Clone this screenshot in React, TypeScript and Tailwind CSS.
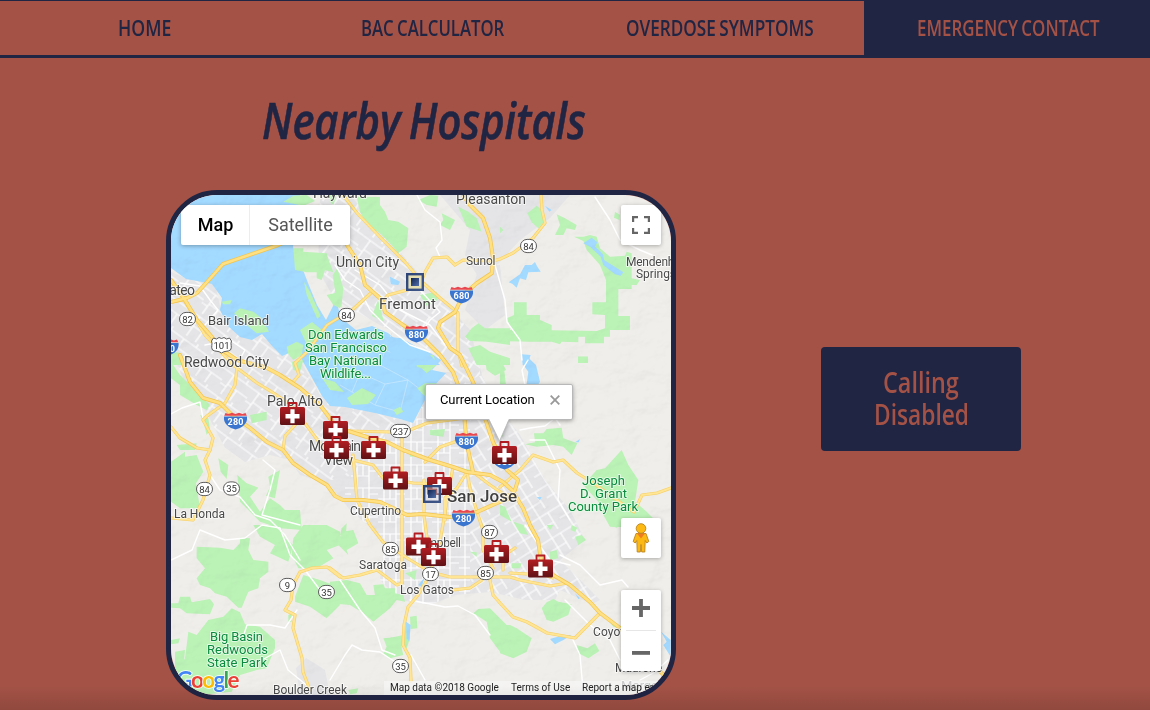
import { useLayoutEffect, useRef, useState, type ReactNode } from "react";

/** One line of text, condensed horizontally so that it takes up `width` pixels. */
function CondensedText({ text, width }: { text: string; width: number }) {
  const ref = useRef<HTMLSpanElement>(null);
  const [scale, setScale] = useState(1);
  useLayoutEffect(() => {
    if (ref.current) setScale(width / ref.current.offsetWidth);
  }, [width]);
  return (
    <span className="flex justify-start whitespace-nowrap" style={{ width }}>
      <span ref={ref} className="origin-left [word-spacing:-0.06em]" style={{ transform: `scaleX(${scale})` }}>
        {text}
      </span>
    </span>
  );
}

const navItems = [
  { label: "HOME", width: 53, active: false },
  { label: "BAC CALCULATOR", width: 143, active: false },
  { label: "OVERDOSE SYMPTOMS", width: 188, active: false },
  { label: "EMERGENCY CONTACT", width: 183, active: true },
];

const highways = [
  "171,280 185,300 197,320 212,337 218,347 237,360 260,366 267,368 280,375 300,388 320,405 335,425 348,431 370,438 387,442 403,450 430,460 453,467 467,472 490,475 503,482 512,490 523,508 530,525 538,540 541,560 553,575 570,585 590,602 600,613 620,628 650,660 668,680",
  "171,302 187,298 197,293 207,282 223,264 278,245 335,222",
  "180,355 190,382 203,398 220,403 232,415 250,428 267,442 283,450 293,463 310,475 327,485 335,496 343,500 363,500 380,502 393,508 407,515 423,514 450,517 477,512 497,503 510,498 515,490 518,480 507,470 493,442 485,418 473,382 460,355 450,348 438,328 440,322 455,312 463,295 477,283 492,273 493,258 490,238 483,218 470,205 463,195",
  "335,222 347,245 360,265 365,285 382,300 385,312 403,325 423,338 440,355 453,372 463,398 465,425 467,445 473,472",
];

const majorRoads = [
  "343,195 357,213 380,237 405,262 422,282 440,298 457,312",
  "458,313 458,350 462,366",
  "541,195 542,210 545,223 533,238 513,253 500,259 493,261 463,260 455,265 447,257 433,258 425,272 420,285 407,290 388,295 384,300",
  "372,292 350,312 340,317 327,325 307,352 295,363 299,375 293,382",
  "171,302 184,300 205,335 233,365 257,383 272,392 291,405 310,430 325,450 353,460 373,465 383,478 413,483 445,484",
  "237,368 235,385 225,403 207,416 203,420 213,438 210,450 205,460 210,475 203,500 193,520 171,518",
  "171,427 180,438 197,448 210,450",
  "283,450 285,436 296,424 304,410",
  "353,455 357,500 370,525 383,542 407,558 430,572 450,577 477,577 510,577 520,580 550,586 567,583",
  "510,573 545,575 553,578",
  "348,431 390,432 410,430 427,423 450,420 465,418",
  "453,467 447,500 442,530 438,550 430,572 427,580 418,595 408,607 404,625 403,645 410,658 411,681",
  "477,512 483,530 483,550 493,568 490,580 493,595 500,603 513,617 527,622 547,633 575,638 600,613",
  "467,472 470,488 477,512",
  "330,568 343,578 360,575 377,570 397,585 402,583",
  "402,435 402,583",
  "424,480 424,516 428,545",
  "453,590 470,588 482,580",
  "340,577 327,567 312,568 300,572 293,585 291,600 285,610 295,615 293,628 302,658 303,672 310,690",
  "500,487 520,470 533,455 553,462 563,460 577,473 593,483 610,495 625,506 634,512 642,495 657,493 671,488",
  "425,462 440,447 460,440",
  "467,472 457,488 445,498 445,520",
  "473,472 490,485 505,495 512,495",
  "503,570 503,556 515,548",
];

const minorRoads = [
  "417,195 425,210 440,222 442,240 436,248 440,257",
  "495,265 505,300 507,322 520,340 522,360",
  "595,197 610,220 620,240 640,250 652,255",
  "171,414 182,408 200,402 203,418",
  "210,475 220,490 240,497 255,515 270,520 285,535 300,560",
  "263,460 275,470 270,490 262,515 300,525",
  "171,560 192,550 200,530 225,540 245,538 262,525 280,528 290,555 305,570 320,590",
  "242,640 247,625 270,625 285,628 297,610",
  "262,660 280,650 288,670 310,688",
  "330,680 345,655 352,645 362,650 380,652 400,665",
  "340,580 360,610 375,628 382,650 395,655",
  "411,655 425,680",
  "410,600 445,607 458,606 475,615 490,635",
  "520,430 530,428 545,426 555,418 560,425",
  "550,395 540,385 525,385 522,370 528,360",
  "530,440 545,440 560,470 558,500 570,520",
  "560,555 580,565 600,585 622,580 628,587",
  "525,525 550,560 570,565",
  "565,600 590,625 610,640 620,660",
  "573,640 580,655 583,690",
  "640,680 655,672 668,660",
  "205,345 230,340 245,350 235,368",
  "180,283 200,286 210,300 218,310 205,325",
  "335,265 345,280 360,290 370,310 385,325 410,345 430,352",
  "355,270 380,285 400,310 430,325 445,345",
  "420,290 440,312 430,320 420,335",
];

type Label = [text: string, x: number, y: number, size: number, width?: number];

const townLabels: Label[] = [
  ["Hayward", 313, 198, 14, 54],
  ["Pleasanton", 456, 204, 14, 70],
  ["Union City", 336, 267, 14, 63],
  ["Sunol", 466, 265, 12, 29.5],
  ["Mendenhall", 626, 265.5, 12, 60],
  ["Springs", 636, 277.5, 12, 40],
  ["Fremont", 379, 309, 15, 57],
  ["San Mateo", 133, 294.5, 14, 62],
  ["Bair Island", 208, 324.5, 13, 61],
  ["Redwood City", 184, 367, 14, 85],
  ["Palo Alto", 267, 406, 14, 56],
  ["Mountain", 309, 451, 14, 52],
  ["View", 324, 465, 14, 29],
  ["Cupertino", 350, 514.5, 12, 51],
  ["Campbell", 413, 547, 12, 48],
  ["Saratoga", 359, 568.5, 12, 48],
  ["Los Gatos", 400, 594, 12, 54],
  ["La Honda", 174, 518, 12, 51],
  ["Boulder Creek", 273, 694, 12, 74],
  ["Coyote", 593, 635.5, 12, 38],
  ["Madrone", 615, 672, 12, 47],
  ["Morgan Hill", 621, 690, 13, 66],
];

const parkLabels: Label[] = [
  ["Don Edwards", 308, 338.5, 13, 76],
  ["San Francisco", 305, 351.5, 13, 82],
  ["Bay National", 309, 364.5, 13, 73],
  ["Wildlife...", 320, 377.5, 13, 51],
  ["Joseph", 582, 484.5, 13, 43],
  ["D. Grant", 580, 497.5, 13, 47],
  ["County Park", 568, 510.5, 13, 70],
  ["Big Basin", 210, 640.5, 13, 53],
  ["Redwoods", 207, 653.5, 13, 61],
  ["State Park", 207, 666.5, 13, 60],
];

const interstates: [string, number, number][] = [
  ["680", 461.5, 295],
  ["880", 416.5, 334],
  ["280", 235.5, 421],
  ["880", 466.5, 441],
  ["280", 463.5, 518],
  ["680", 504.5, 461],
  ["280", 167, 347.5],
];

const stateRoutes: [string, number, number][] = [
  ["84", 528.5, 246],
  ["84", 346.5, 315],
  ["82", 187.5, 319],
  ["237", 400.5, 431],
  ["84", 204.5, 489],
  ["35", 231.5, 488.5],
  ["87", 489.5, 532],
  ["85", 390.5, 549],
  ["85", 485.5, 573],
  ["17", 430.5, 574],
  ["9", 287.5, 585],
  ["35", 326.5, 592],
  ["35", 400.5, 666],
];

const hospitals: [number, number][] = [
  [292.5, 425],
  [335.5, 439],
  [336.5, 459],
  [373.5, 459],
  [395.5, 489.5],
  [439.5, 495],
  [504.5, 464],
  [418.5, 555.5],
  [433.5, 566],
  [496.5, 563],
  [540.5, 577.5],
];

/** A map section with its own origin, drawn in thirds of a pixel. */
function Section({ x, y, fill, shapes }: { x: number; y: number; fill: string; shapes: string[] }) {
  return (
    <g transform={`translate(${x} ${y}) scale(0.33333)`} fill={fill}>
      {shapes.map((points) => (
        <polygon key={points} points={points} />
      ))}
    </g>
  );
}

const parks: { x: number; y: number; shapes: string[] }[] = [
  { x: 160, y: 185, shapes: ["400,190 430,190 430,200 500,205 505,222 520,262 495,255 485,285 470,280 470,262 440,262 405,255", "432,290 450,320 482,392 472,402 440,330", "500,330 540,320 540,370 520,360", "370,50 400,32 440,30 465,48 430,62", "222,385 240,370 280,380 305,400 327,440 290,445 260,420", "380,485 410,470 430,480 425,510 400,525 385,508", "33,500 60,503 72,520 70,540 33,540", "185,350 215,345 210,358 190,358"] },
  { x: 330, y: 185, shapes: ["80,35 150,36 150,60 165,80 175,105 205,110 235,130 230,185 205,205 185,180 150,145 110,120 90,80", "265,45 300,30 325,32 320,65 290,60", "385,65 415,80 440,100 455,140 410,125 395,90", "335,85 375,105 360,135 330,120 340,105", "405,455 425,430 445,415 465,430 540,430 540,480 470,470 420,468", "415,490 450,480 480,500 540,520 540,540 440,540", "8,270 22,250 40,310 34,370 20,350", "270,330 320,320 322,345 290,362", "0,0 20,30 10,60 0,50"] },
  { x: 500, y: 185, shapes: ["82,85 110,62 125,75 138,105 115,130 95,112", "170,88 195,100 230,120 225,135 200,130 190,150 165,150 180,120", "222,155 250,155 270,150 290,155 300,190 330,215 375,212 380,200 395,205 395,280 420,285 410,300 395,300 395,312 355,312 355,393 390,393 390,435 330,435 330,455 312,455 312,475 255,475 255,455 235,455 235,472 185,470 180,478 155,470 90,470 0,468 0,432 35,435 20,400 42,390 42,352 80,352 80,390 120,390 120,405 155,420 155,436 290,438 315,430 315,390 277,388 277,352 318,352 318,285 300,240 260,195 250,168", "234,515 264,515 264,534 234,534", "0,510 15,530 10,540 0,540", "345,80 360,90 358,105 342,98", "0,125 10,135 0,145"] },
  { x: 160, y: 355, shapes: ["33,20 60,60 85,85 130,130 150,150 140,165 110,150 60,120 60,90 33,70", "33,320 75,290 75,305 110,300 130,350 108,385 120,460 60,460 33,440", "175,310 205,330 200,372 182,350", "232,360 260,385 295,398 270,425 300,470 330,430 360,450 375,465 420,465 425,525 360,520 300,500 240,440", "325,365 360,345 345,430 318,422 330,395", "270,180 320,170 320,195 275,205", "50,270 110,265 105,285 60,285", "120,180 145,190 150,225 140,240 130,200", "395,20 430,15 420,50 400,45"] },
  { x: 330, y: 355, shapes: ["260,0 310,0 320,30 290,55 275,40 260,35", "465,15 490,0 510,10 528,45 495,62 470,45", "262,100 285,85 320,85 300,130 280,120", "300,225 345,222 340,245 300,240", "190,165 210,155 220,170 200,180", "500,230 520,240 510,252", "395,340 425,345 420,360", "35,520 50,505 48,540 30,540", "240,290 255,290 255,305 240,305"] },
  { x: 500, y: 355, shapes: ["75,268 105,262 102,235 130,235 140,222 185,218 190,250 232,265 215,300 190,275 160,270 110,275", "365,285 385,330 415,375 405,440 440,470 480,510 480,520 330,515 310,480 295,440 250,390 290,345 315,340", "234,5 264,5 264,24 234,24", "0,450 15,455 35,500 0,480", "40,500 70,510 85,540 60,535", "0,20 12,40 18,90 0,90", "215,510 232,518 225,530 212,525"] },
  { x: 160, y: 525, shapes: ["110,65 180,68 220,75 240,55 240,38 270,40 265,75 280,105 325,110 325,140 300,160 295,190 265,200 245,248 235,248 200,215 165,205 150,190 120,180 110,160 135,130 110,100", "33,235 55,235 60,215 90,215 95,232 150,222 162,238 150,268 80,265 60,250 33,248", "145,285 190,275 215,250 240,262 255,298 300,305 345,345 345,370 320,430 290,435 240,450 215,500 120,510 60,480 50,440 75,400 85,320 110,330", "280,0 360,0 375,40 400,60 385,110 330,85 345,60 300,35", "400,40 430,0 500,0 540,20 540,60 500,75 520,100 470,130 415,130 395,90", "405,215 430,150 480,165 520,180 540,240 500,280 450,245 405,230", "33,345 60,340 55,355 33,358", "45,380 75,375 70,430 45,440", "385,270 395,265 395,290 385,292"] },
  { x: 330, y: 525, shapes: ["0,40 30,35 35,20 70,15 85,55 50,75 55,90 25,60", "0,170 50,165 90,175 110,210 135,210 130,180 160,178 165,190 195,190 195,205 220,210 225,230 200,225 180,250 130,290 100,265 60,240 0,235", "160,340 215,335 215,370 220,390 180,400 160,385 170,365", "240,275 260,272 262,310 242,312", "430,265 445,252 480,250 500,270 540,310 540,390 510,380 480,340 470,290", "225,145 260,135 255,165", "55,495 85,490 80,505 60,508", "175,340 220,330 230,290 240,340 230,370", "420,80 440,82 440,95"] },
  { x: 500, y: 525, shapes: ["125,250 140,232 160,222 175,230 215,238 205,270 160,290 140,285", "0,300 30,300 50,310 95,340 80,380 40,400 0,385", "230,360 262,370 285,355 298,378 265,400 235,385", "315,275 345,300 360,310 340,305", "140,0 160,0 150,15", "225,35 245,30 258,45 235,60", "150,80 170,75 175,100 150,105", "35,115 65,115 60,130 35,130", "325,0 360,0 350,8", "430,480 450,470 460,480"] },
];

const lakes: { x: number; y: number; shapes: string[] }[] = [
  { x: 500, y: 185, shapes: ["26,292 60,268 75,240 95,240 105,231 112,245 122,260 85,262 78,285 60,280 50,308 38,297", "250,175 275,158 292,172 285,185 300,198 310,210 312,225 370,262 362,272 345,268 310,240 302,215 270,185", "65,508 92,510 82,540 68,540", "135,62 155,75 148,80"] },
  { x: 500, y: 355, shapes: ["72,0 80,0 92,15 108,30 120,80 115,88 80,88 85,50 70,30", "225,262 240,252 236,262", "110,426 125,426 120,436"] },
  { x: 330, y: 525, shapes: ["228,290 242,300 238,350 230,340", "265,180 285,155 275,185"] },
  { x: 500, y: 525, shapes: ["483,320 512,345 512,395 490,360 500,350", "150,342 180,333 215,330 190,345 165,358", "225,205 240,220 235,222"] },
  { x: 330, y: 185, shapes: ["180,275 210,290 205,300 182,298", "175,455 215,460 250,480 290,500 330,540 200,540 170,480"] },
];

const urbanShapes = [
  "171,272 190,280 215,283 222,315 240,335 258,335 275,345 300,360 320,395 345,405 415,423 430,385 445,372 480,372 500,410 520,435 545,480 570,510 585,540 560,560 600,600 592,604 560,590 555,600 525,600 490,592 455,595 430,605 400,600 380,580 385,540 350,510 330,485 300,475 290,460 270,455 245,462 225,448 205,410 190,395 171,350",
  "320,195 350,195 420,275 470,330 482,375 450,372 420,345 380,325 335,300 318,270",
  "440,195 570,195 550,218 520,240 500,262 480,280 465,255 470,230",
  "480,265 500,265 505,315 485,330 465,310",
  "296,668 306,658 325,670 330,695 300,695",
];

function MapDrawing() {
  return (
    <svg viewBox="171 195 500 500" className="block size-full" fontFamily="Roboto, sans-serif">
      <defs>
        <clipPath id="urban-area">
          {urbanShapes.slice(0, 2).map((p) => (
            <polygon key={p} points={p} />
          ))}
        </clipPath>
        <pattern id="diagonal-streets" width="31" height="27" patternUnits="userSpaceOnUse" patternTransform="rotate(36)">
          <path d="M0 4H31M7 4V27M22 0V4M0 18H7M7 15H31M18 15V27" stroke="#fff" strokeWidth="1.2" fill="none" />
        </pattern>
        <pattern id="straight-streets" width="27" height="23" patternUnits="userSpaceOnUse">
          <path d="M0 5H27M6 0V23M18 0V23M0 16H18M18 11H27M12 5V16" stroke="#fff" strokeWidth="1.2" fill="none" />
        </pattern>
        <pattern id="east-streets" width="25" height="24" patternUnits="userSpaceOnUse" patternTransform="rotate(-32)">
          <path d="M0 5H25M8 0V24M18 5V24M0 16H18" stroke="#fff" strokeWidth="1.2" fill="none" />
        </pattern>
        <filter id="relief" x="0" y="0" width="100%" height="100%">
          <feTurbulence type="fractalNoise" baseFrequency="0.035 0.045" numOctaves="4" seed="8" />
          <feDiffuseLighting surfaceScale="5" lightingColor="#fff" diffuseConstant="1.1">
            <feDistantLight azimuth="225" elevation="58" />
          </feDiffuseLighting>
        </filter>
        <linearGradient id="kit" x1="0" y1="0" x2="0" y2="1">
          <stop offset="0" stopColor="#b21d22" />
          <stop offset="1" stopColor="#5f1216" />
        </linearGradient>
        <linearGradient id="station" x1="0" y1="0" x2="1" y2="1">
          <stop offset="0" stopColor="#2c4478" />
          <stop offset="1" stopColor="#3f5788" />
        </linearGradient>
        <linearGradient id="station-core" x1="0" y1="0" x2="1" y2="1">
          <stop offset="0" stopColor="#10234f" />
          <stop offset="1" stopColor="#5370ab" />
        </linearGradient>
      </defs>

      <rect x="171" y="195" width="500" height="500" fill="#f0eeea" />
      <g fill="#e5e5e8">
        {urbanShapes.map((p) => (
          <polygon key={p} points={p} />
        ))}
      </g>
      <g clipPath="url(#urban-area)">
        <polygon points="171,195 480,195 480,375 400,420 345,480 171,480" fill="url(#diagonal-streets)" />
        <polygon points="400,420 470,380 470,610 345,610 345,480" fill="url(#straight-streets)" />
        <rect x="470" y="376" width="150" height="240" fill="url(#east-streets)" />
      </g>

      <path
        d="M171 195H300L293 247 300 262 308 283 317 305 326 320 336 300 341 318 356 330 372 326 388 333 402 345 425 350 441 360 432 370 446 373 432 388 426 398 413 423 400 419 375 413 345 407 330 406 322 396 311 376 302 360 296 350 282 356 272 346 262 334 252 340 240 337 228 326 220 310 222 298 212 284 197 281 186 279 171 268Z"
        fill="#a3daff"
      />
      <g stroke="#c9e9ff" strokeWidth="0.8" fill="none">
        <path d="M345 380 360 373 385 384 408 380 425 393M360 373 352 392 375 405 385 384M375 405 400 412 408 380M392 333 385 350 410 360 432 370M385 350 380 365 408 380M340 385 352 392" />
      </g>

      {parks.map((s, i) => (
        <Section key={i} {...s} fill="#bbf2b6" />
      ))}
      <g fill="#bbf2b6">
        <polygon points="300,330 312,322 322,330 316,342 308,347" />
        <polygon points="347,398 362,388 376,395 368,404 352,405" />
        <polygon points="378,300 384,322 372,316" />
        <polygon points="322,378 335,382 344,392 330,390" />
      </g>
      {lakes.map((s, i) => (
        <Section key={i} {...s} fill="#a3daff" />
      ))}
      <path
        d="M171 360 225 450 300 475 345 510 385 545 400 600 490 595 600 605 560 560 585 540 545 480 510 420 482 375 470 330 400 260 360 195H671V695H171Z"
        filter="url(#relief)"
        opacity="0.09"
        className="mix-blend-multiply"
      />

      <g fill="none" strokeLinejoin="round" strokeLinecap="round">
        {minorRoads.map((p) => (
          <polyline key={p} points={p} stroke="#fff" strokeWidth="1.4" />
        ))}
        {majorRoads.map((p) => (
          <polyline key={p} points={p} stroke="#f6cf65" strokeWidth="3.2" />
        ))}
        {majorRoads.map((p) => (
          <polyline key={p} points={p} stroke="#ffe594" strokeWidth="2" />
        ))}
        {highways.map((p) => (
          <polyline key={p} points={p} stroke="#f3c54f" strokeWidth="4" />
        ))}
        {highways.map((p) => (
          <polyline key={p} points={p} stroke="#ffe183" strokeWidth="2.6" />
        ))}
      </g>

      {interstates.map(([n, x, y]) => (
        <g key={`${n}-${x}`} transform={`translate(${x} ${y})`}>
          <path d="M-11.5-4.5H11.5C12.5 3 6 7 0 8.5-6 7-12.5 3-11.5-4.5Z" fill="#3a76d0" />
          <path d="M-10-8-7-7-3.5-8.3 0-7 3.5-8.3 7-7 10-8 11.3-5.3H-11.3Z" fill="#e8474f" />
          <text y="4" textAnchor="middle" fontSize="9" fontWeight="700" fill="#fff" textLength="16">
            {n}
          </text>
        </g>
      ))}
      {stateRoutes.map(([n, x, y]) => {
        const half = n.length === 3 ? 10 : 8;
        return (
          <g key={`${n}-${x}-${y}`} transform={`translate(${x} ${y})`}>
            <rect x={-half} y="-6.6" width={half * 2} height="13.2" rx="6.6" fill="#fff" stroke="#5c5c5c" />
            <text y="3.5" textAnchor="middle" fontSize="9.5" fill="#333">
              {n}
            </text>
          </g>
        );
      })}
      <g transform="translate(221.5 345)">
        <path d="M-8-7-5-6-2.5-7.5 0-6.5 2.5-7.5 5-6 8-7 10-4C8.5-1 11 2 9 5 6 7 3 5.5 0 8-3 5.5-6 7-9 5-11 2-8.5-1-10-4Z" fill="#fff" stroke="#5c5c5c" />
        <text y="3.5" textAnchor="middle" fontSize="9.5" fill="#333">
          101
        </text>
      </g>

      <g fill="#484848" stroke="#fff" strokeOpacity="0.7" strokeWidth="1.8" strokeLinejoin="round" paintOrder="stroke">
        {townLabels.map(([t, x, y, size, w]) => (
          <text key={t} x={x} y={y} fontSize={size} textLength={w}>
            {t}
          </text>
        ))}
        <text x="447" y="501.5" fontSize="17" fontWeight="500" textLength="70" fill="#404040">
          San Jose
        </text>
      </g>
      <g fill="#098a3e" stroke="#e6fbe6" strokeWidth="1.8" strokeLinejoin="round" paintOrder="stroke">
        {parkLabels.map(([t, x, y, size, w]) => (
          <text key={t} x={x} y={y} fontSize={size} textLength={w}>
            {t}
          </text>
        ))}
      </g>

      {hospitals.map(([x, bottom]) => (
        <g key={`${x}-${bottom}`} transform={`translate(${x} ${bottom - 18})`}>
          <path d="M-4 1V-4H4V1" fill="none" stroke="#b21d22" strokeWidth="1.8" strokeLinejoin="round" />
          <rect x="-12.5" y="0" width="25" height="18" rx="1.6" fill="url(#kit)" />
          <path d="M-2.1 2.2H2.1V7H7V11.4H2.1V16.2H-2.1V11.4H-7V7H-2.1Z" fill="#fff" />
        </g>
      ))}
      <g fill="none" stroke="url(#station)" strokeWidth="2.4">
        <rect x="407.2" y="274.2" width="15.6" height="15.6" fill="#e6dfb4" />
        <rect x="424.2" y="486.2" width="15.6" height="15.6" fill="#d9d8df" fillOpacity="0.45" />
      </g>
      <g fill="url(#station-core)">
        <rect x="411" y="278" width="8" height="8" />
        <rect x="428" y="490" width="8" height="8" />
      </g>

      <text x="176.5" y="688" fontFamily="Lato, sans-serif" fontSize="22.5" fontWeight="700" textLength="63" stroke="#fff" strokeWidth="1.6" paintOrder="stroke" strokeLinejoin="round">
        <tspan fill="#4285f4">G</tspan>
        <tspan fill="#ea4335">o</tspan>
        <tspan fill="#fbbc05">o</tspan>
        <tspan fill="#4285f4">g</tspan>
        <tspan fill="#34a853">l</tspan>
        <tspan fill="#ea4335">e</tspan>
      </text>
    </svg>
  );
}

function Control({ className, children }: { className: string; children: ReactNode }) {
  return (
    <div className={`absolute left-[450px] flex w-10 flex-col items-center rounded-xs bg-white shadow-[0_1px_4px_rgba(0,0,0,0.3)] ${className}`}>
      {children}
    </div>
  );
}

function HospitalMap() {
  return (
    <div className="relative size-[510px] overflow-hidden rounded-[51px] border-[5px] border-[#212544] font-[Roboto,sans-serif]">
      <MapDrawing />

      <div className="absolute top-2.5 left-2.5 flex h-10 rounded-xs bg-white text-lg leading-10 shadow-[0_1px_4px_rgba(0,0,0,0.3)]">
        <div className="w-[69px] border-r border-[#ededed] pl-px text-center font-medium text-black">Map</div>
        <div className="w-[100px] pl-px text-center text-[#565656]">Satellite</div>
      </div>

      <Control className="top-2.5 h-10 justify-center">
        <svg viewBox="0 0 18 18" className="size-[18px]" fill="none" stroke="#666" strokeWidth="2.2">
          <path d="M1.1 6V1.1H6M12 1.1H16.9V6M16.9 12V16.9H12M6 16.9H1.1V12" />
        </svg>
      </Control>

      <Control className="top-[323px] h-10 justify-center">
        <svg viewBox="0 0 18 30" className="h-[30px] w-[18px]" stroke="#b98424" strokeWidth="0.9" strokeLinejoin="round">
          <path d="M4 10.5H14L16.8 18.5 14.8 20 13.2 17.5 12.8 29H9.7L9 21.5 8.3 29H5.2L4.8 17.5 3.2 20 1.2 18.5Z" fill="#fdb913" />
          <path d="M5 10.5H13L9 15.5Z" fill="#ee7d22" stroke="none" />
          <circle cx="9" cy="5.5" r="4.8" fill="#fdb913" />
        </svg>
      </Control>

      <Control className="top-[395px] h-[81px]">
        <div className="flex h-[41px] w-[30px] items-center justify-center border-b border-[#e6e6e6]">
          <svg viewBox="0 0 18 18" className="size-[18px] translate-y-[-2px]" stroke="#666" strokeWidth="3.8">
            <path d="M9 0V18M0 9H18" />
          </svg>
        </div>
        <div className="flex h-10 items-center justify-center">
          <svg viewBox="0 0 18 4" className="h-1 w-[18px] translate-y-[2px]" fill="#666">
            <rect width="18" height="3.8" />
          </svg>
        </div>
      </Control>

      <div className="absolute top-[189px] left-[254px] drop-shadow-[0_1px_2px_rgba(0,0,0,0.35)]">
        <div className="flex h-9 w-[148px] items-center justify-between rounded-xs border border-[#b8b8b8] bg-white pr-3 pl-3.5 text-[13px] text-black">
          <span className="-mt-1 tracking-[-0.1px] whitespace-nowrap">Current Location</span>
          <svg viewBox="0 0 10 10" className="size-2.5 -translate-y-0.5" stroke="#999" strokeWidth="1.8">
            <path d="M0.7 0.7 9.3 9.3M9.3 0.7 0.7 9.3" />
          </svg>
        </div>
        <svg viewBox="0 0 20 23" className="absolute top-[35px] left-[64px] h-[23px] w-5">
          <path d="M0 0 10.5 22 20 0Z" fill="#fff" />
          <path d="M0 0.5 10.5 22 20 0.5" fill="none" stroke="#bbb" strokeWidth="0.8" />
        </svg>
      </div>

      <div className="absolute right-0 bottom-0 flex h-3.5 w-[287px] gap-3 bg-[#f5f5f5]/75 pl-1.5 text-[10px] leading-3.5 whitespace-nowrap text-[#222]">
        <span className="w-[109px]">Map data ©2018 Google</span>
        <span className="w-[59px]">Terms of Use</span>
        <span>Report a map error</span>
      </div>
    </div>
  );
}

export default function App() {
  return (
    <div className="relative flex h-[710px] w-full flex-col overflow-hidden bg-[#a45246] font-['Open_Sans',sans-serif] text-[#212544]">
      <nav className="flex h-[58px] shrink-0 overflow-hidden border-t border-b-[3px] border-[#212544] text-[22px] font-semibold">
        {navItems.map((item) => (
          <a
            key={item.label}
            className={`flex w-72 shrink-0 items-center justify-center pb-0.5 leading-[52px] ${item.active ? "bg-[#212544] text-[#a45246]" : ""}`}
          >
            <CondensedText text={item.label} width={item.width} />
          </a>
        ))}
      </nav>

      <main className="flex">
        <section className="flex w-[842px] flex-col items-center">
          <h1 className="mt-[28px] mb-[36px] h-[68px] pl-1.5 text-[50px] leading-[68px] font-semibold italic [-webkit-text-stroke:0.6px_#212544]">
            <CondensedText text="Nearby Hospitals" width={324} />
          </h1>
          <HospitalMap />
        </section>
        <button className="mt-[289px] -ml-[21px] flex h-[104px] w-[200px] flex-col items-center justify-center rounded bg-[#212544] pb-0.5 text-[28px] leading-8 font-semibold text-[#a45246]">
          <CondensedText text="Calling" width={76} />
          <CondensedText text="Disabled" width={95} />
        </button>
      </main>
      <div className="pointer-events-none absolute inset-x-0 bottom-0 h-6 bg-linear-to-b from-transparent to-black/12" />
    </div>
  );
}
